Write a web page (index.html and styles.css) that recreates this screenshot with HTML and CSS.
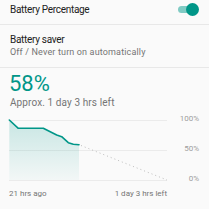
FILE: index.html
```html
<!DOCTYPE html>
<html>
<head>
<meta charset="utf-8">
<link rel="stylesheet" href="styles.css">
</head>
<body>
<div class="row row-toggle">
  <span class="title">Battery Percentage</span>
  <span class="switch"><span class="track"></span><span class="thumb"></span></span>
</div>
<div class="row row-saver">
  <span class="title">Battery saver</span>
  <span class="sub">Off / Never turn on automatically</span>
</div>
<div class="battery">
  <div class="pct">58%</div>
  <div class="approx">Approx. 1 day 3 hrs left</div>
  <div class="chart">
    <svg class="graph" width="170" height="66" viewBox="0 116 170 66">
      <defs>
        <linearGradient id="fillg" x1="0" y1="0" x2="0" y2="1">
          <stop offset="0" stop-color="#009688" stop-opacity="0.2"/>
          <stop offset="1" stop-color="#009688" stop-opacity="0.03"/>
        </linearGradient>
      </defs>
      <line x1="9" y1="120.5" x2="167" y2="120.5" stroke="#ebebeb" stroke-width="1"/>
      <line x1="9" y1="150.5" x2="167" y2="150.5" stroke="#ebebeb" stroke-width="1"/>
      <line x1="9" y1="180.5" x2="167" y2="180.5" stroke="#ebebeb" stroke-width="1"/>
      <path d="M9.3 120 L18.3 128.3 L43.3 128.3 L56.7 135 L61.7 136.7 L68.3 142.7 L73.3 144.3 L79 144.7 L79 180 L9.3 180 Z" fill="url(#fillg)"/>
      <path d="M9.3 120 L18.3 128.3 L43.3 128.3 L56.7 135 L61.7 136.7 L68.3 142.7 L73.3 144.3 L79 144.7" fill="none" stroke="#009688" stroke-width="1.6" stroke-linejoin="round" stroke-linecap="round"/>
      <path d="M81 145.5 L167 180" fill="none" stroke="#bdbdbd" stroke-width="1" stroke-dasharray="1 3"/>
    </svg>
    <div class="ylabels">
      <span>100%</span>
      <span>50%</span>
      <span>0%</span>
    </div>
  </div>
  <div class="xlabels">
    <span>21 hrs ago</span>
    <span>1 day 3 hrs left</span>
  </div>
</div>
</body>
</html>
```
FILE: styles.css
```css
html, body {
  margin: 0;
  padding: 0;
  background: #fafafa;
  font-family: Roboto, "Liberation Sans", sans-serif;
  width: 209px;
  height: 209px;
  overflow: hidden;
}
.row {
  display: flex;
  padding-left: 10px;
  border-bottom: 1px solid #e8e8e8;
}
.row-toggle {
  height: 24px;
  align-items: center;
  justify-content: space-between;
  padding-right: 11px;
}
.row-saver {
  height: 42px;
  flex-direction: column;
  justify-content: center;
}
.title {
  font-size: 10px;
  line-height: 12px;
  color: #212121;
  letter-spacing: -0.3px;
}
.row-toggle .title {
  margin-top: -4px;
}
.row-saver .title {
  margin-top: -1px;
}
.sub {
  font-size: 9px;
  line-height: 10px;
  color: #757575;
  letter-spacing: 0.15px;
  margin-top: 1px;
}
.switch {
  position: relative;
  width: 20px;
  height: 14px;
  margin-top: -5px;
}
.track {
  position: absolute;
  left: 0;
  top: 3.5px;
  width: 19px;
  height: 7px;
  border-radius: 4px;
  background: #80cbc4;
}
.thumb {
  position: absolute;
  right: -1px;
  top: 0;
  width: 13px;
  height: 13px;
  border-radius: 50%;
  background: #009688;
}
.battery {
  padding-top: 3px;
}
.pct {
  font-size: 22px;
  line-height: 26px;
  color: #009688;
  padding-left: 9px;
}
.approx {
  font-size: 10px;
  line-height: 12px;
  color: #757575;
  padding-left: 10px;
  letter-spacing: 0.1px;
}
.chart {
  display: flex;
  margin-top: 7px;
}
.graph {
  display: block;
}
.ylabels {
  display: flex;
  flex-direction: column;
  justify-content: space-between;
  align-items: flex-end;
  width: 29px;
  height: 70px;
  margin-top: -2px;
  font-size: 8px;
  line-height: 10px;
  color: #9e9e9e;
}
.xlabels {
  display: flex;
  justify-content: space-between;
  width: 158px;
  padding-left: 9px;
  margin-top: 4px;
  font-size: 8px;
  line-height: 11px;
  color: #757575;
}
```
